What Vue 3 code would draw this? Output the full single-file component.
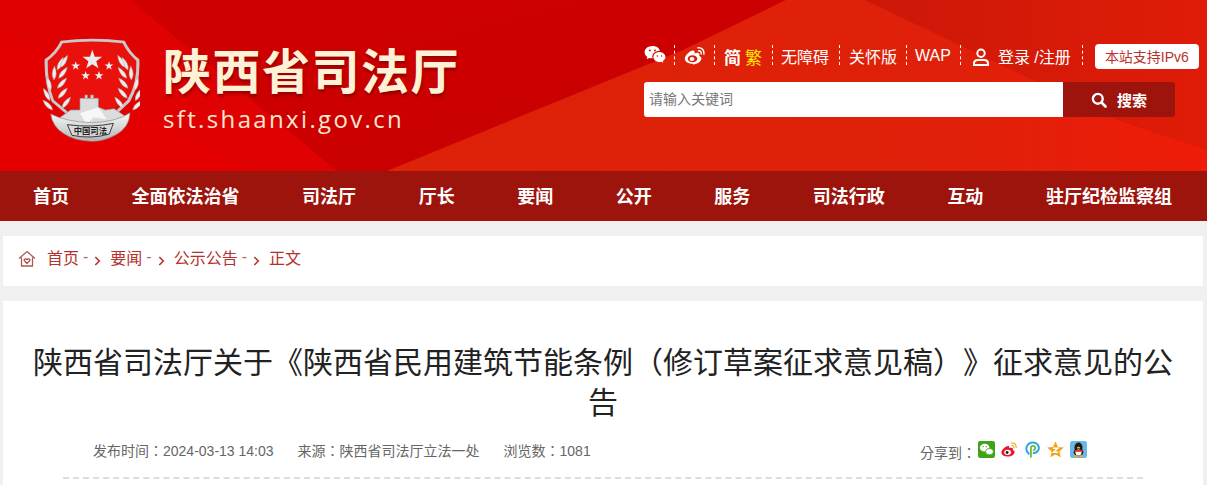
<template>
  <div class="page">
    <header class="top">
      <svg class="top-bg" viewBox="0 0 1207 171" preserveAspectRatio="none" aria-hidden="true">
        <defs>
          <linearGradient id="bandRight" x1="0" y1="0" x2="1" y2="0">
            <stop offset="0" stop-color="#dc2208" />
            <stop offset="0.7" stop-color="#e0200a" />
            <stop offset="1" stop-color="#ee1c08" />
          </linearGradient>
          <linearGradient id="bandDark" x1="0" y1="0" x2="1" y2="0">
            <stop offset="0" stop-color="#cc1808" />
            <stop offset="1" stop-color="#df1c08" />
          </linearGradient>
          <linearGradient id="bandMid" x1="0" y1="0" x2="1" y2="1">
            <stop offset="0" stop-color="#d00000" />
            <stop offset="1" stop-color="#c80000" />
          </linearGradient>
        </defs>
        <rect width="1207" height="171" fill="#e00202" />
        <polygon points="130,0 786,0 683,50 387,171 337,171" fill="url(#bandMid)" />
        <polygon points="0,30 250,171 0,171" fill="#e40000" />
        <polygon points="387,171 683,50 786,0 865,0 960,45 1113,118 1207,150 1207,171" fill="url(#bandRight)" />
        <polygon points="865,0 1207,0 1207,150 1113,118 960,45" fill="url(#bandDark)" />
      </svg>

      <a class="logo">
        <svg class="emblem" viewBox="0 0 330 360" aria-hidden="true">
          <defs>
            <linearGradient id="silver" x1="0" y1="0" x2="0" y2="1">
              <stop offset="0" stop-color="#fafafa" />
              <stop offset="1" stop-color="#b4b4b4" />
            </linearGradient>
            <radialGradient id="shieldRed" cx="0.5" cy="0.4" r="0.7">
              <stop offset="0.75" stop-color="#ea100c" />
              <stop offset="1" stop-color="#b00808" />
            </radialGradient>
          </defs>
          <path d="M92 32Q188 20 284 32Q300 66 328 88Q332 160 300 215L250 262H120L65 215Q42 160 44 88Q76 66 92 32Z" fill="#c9c9c9" />
          <path d="M98 40Q188 29 278 40Q293 70 319 92Q322 160 292 210L245 255H125L72 210Q52 160 53 92Q83 70 98 40Z" fill="url(#shieldRed)" />
          <polygon v-for="s in stars" :key="s.x" :points="starPoints(s.x, s.y, s.r)" fill="#ececec" />
          <g v-for="side in ['left', 'right']" :key="side" :transform="side === 'right' ? 'matrix(-1 0 0 1 376 0)' : ''">
            <path v-for="(l, i) in leaves" :key="i" :transform="`translate(${l.x} ${l.y}) rotate(${l.a})`" d="M0 0Q12 -17 0 -42Q-12 -17 0 0Z" fill="#ececec" stroke="#a3a3a3" stroke-width="1.200" />
          </g>
          <path d="M88 264L122 240L150 240V205H205V232L226 240L252 236L290 262L240 300H140Z" fill="#dcdcdc" stroke="#9a9a9a" stroke-width="2" />
          <path d="M165 205V195H172V205M182 205V195H190V205" fill="#dcdcdc" stroke="#9a9a9a" stroke-width="2" />
          <path d="M150 250L205 232L230 268L190 262L170 285Z" fill="#f7f7f7" />
          <path d="M62 252Q110 276 185 278Q260 276 300 248Q298 292 258 314Q222 334 185 334Q130 332 100 310Q68 290 62 252Z" fill="url(#silver)" stroke="#8d8d8d" stroke-width="2" />
          <path d="M112 284Q185 294 250 280L238 312Q185 328 126 316Z" fill="#d9d9d9" stroke="#3c3c3c" stroke-width="3" />
          <text x="181" y="312" class="emblem-text" text-anchor="middle">中国司法</text>
        </svg>
        <div class="logo-text">
          <div class="logo-name">陕西省司法厅</div>
          <div class="logo-url">sft.shaanxi.gov.cn</div>
        </div>
      </a>

      <div class="tools">
        <div class="tool-row">
          <svg class="ico-wechat" viewBox="0 0 22 19" aria-hidden="true">
            <path d="M8.500 1C4 1 .6 3.800.6 7.200c0 2 1.100 3.600 2.800 4.800l-.7 2.200 2.500-1.300c1 .3 1.800.4 2.800.4h.6c-.2-.5-.3-1-.3-1.600 0-3.200 3-5.700 6.800-5.700h.5C15.900 3.200 12.500 1 8.500 1z" fill="#fff" />
            <path d="M21.400 12.100c0-2.800-2.800-5-6-5-3.400 0-6 2.200-6 5s2.600 5 6 5c.7 0 1.400-.1 2-.3l1.900 1-.5-1.700c1.500-1 2.600-2.400 2.600-4z" fill="#fff" />
            <circle cx="5.800" cy="5.500" r="1" fill="#d8130a" />
            <circle cx="11" cy="5.500" r="1" fill="#d8130a" />
            <circle cx="13.300" cy="11" r=".8" fill="#d8130a" />
            <circle cx="17.600" cy="11" r=".8" fill="#d8130a" />
          </svg>
          <i class="sep"></i>
          <svg class="ico-weibo" viewBox="0 0 22 19" aria-hidden="true">
            <path d="M9 17.800c-4.300 0-8.200-2-8.200-5 0-1.700 1.100-3.600 2.900-5.400C6.200 4.900 9 3.800 10.200 5c.6.500.6 1.400.3 2.400 1.600-.6 3.700-.9 4.600.1.500.6.500 1.500 0 2.500 1.200.4 2.300 1.100 2.300 2.600 0 2.600-3.800 5.800-8.400 5.800z" fill="#fff" />
            <ellipse cx="8.500" cy="12.700" rx="4.800" ry="3.500" fill="#dc1c0b" />
            <ellipse cx="8" cy="12.900" rx="2.400" ry="2" fill="#fff" />
            <path d="M14 1.800c3.500-.6 6.700 2.300 5.900 6.300M14.500 4.900c1.700-.3 3.100 1.100 2.700 3" fill="none" stroke="#fff" stroke-width="1.500" stroke-linecap="round" />
          </svg>
          <i class="sep"></i>
          <span class="lang">简</span>
          <span class="lang alt">繁</span>
          <i class="sep"></i>
          <a class="link first">无障碍</a>
          <i class="sep"></i>
          <a class="link">关怀版</a>
          <i class="sep"></i>
          <a class="link wap">WAP</a>
          <i class="sep"></i>
          <svg class="ico-user" viewBox="0 0 18 18" aria-hidden="true">
            <circle cx="9" cy="5.200" r="3.700" fill="none" stroke="#fff" stroke-width="2" />
            <path d="M2 17v-1.500c0-2.200 1.600-3.500 3.800-3.500h6.400c2.200 0 3.800 1.300 3.800 3.500V17z" fill="none" stroke="#fff" stroke-width="2" />
          </svg>
          <a class="link login">登录 /注册</a>
          <i class="sep"></i>
          <a class="ipv6">本站支持IPv6</a>
        </div>
        <div class="search">
          <input class="search-input" type="text" placeholder="请输入关键词" />
          <button class="search-btn">
            <svg viewBox="0 0 16 16" aria-hidden="true">
              <circle cx="6.800" cy="6.800" r="4.900" fill="none" stroke="#fff" stroke-width="2.400" />
              <path d="M10.500 10.500L14.500 14.500" stroke="#fff" stroke-width="2.600" stroke-linecap="round" />
            </svg>
            <span>搜索</span>
          </button>
        </div>
      </div>
    </header>

    <nav class="nav">
      <a v-for="item in navItems" :key="item">{{ item }}</a>
    </nav>

    <div class="crumbs">
      <svg class="ico-home" viewBox="0 0 18 18" aria-hidden="true">
        <path d="M1 8.500L9 1.500l8 7M3.500 7.500V16h11V7.500" fill="none" stroke="#a85b5b" stroke-width="1.300" />
        <path d="M9 13.500L6.300 10.700c-.9-1.400 1.500-2.700 2.700-1.100 1.200-1.600 3.600-.3 2.700 1.100z" fill="none" stroke="#c03a3a" stroke-width="1.200" />
      </svg>
      <template v-for="(c, i) in crumbs" :key="c">
        <a>{{ c }}</a>
        <template v-if="i < crumbs.length - 1">
          <span class="dash">-</span>
          <svg class="chev" viewBox="0 0 8 12" aria-hidden="true">
            <path d="M1.500 1.500L6 6l-4.500 4.500" fill="none" stroke="#b3322e" stroke-width="1.800" />
          </svg>
        </template>
      </template>
    </div>

    <main class="article">
      <h1>陕西省司法厅关于《陕西省民用建筑节能条例（修订草案征求意见稿）》征求意见的公告</h1>
      <div class="meta">
        <div class="meta-left">
          <span>发布时间：2024-03-13 14:03</span>
          <span>来源：陕西省司法厅立法一处</span>
          <span>浏览数：1081</span>
        </div>
        <div class="share">
          <span class="share-label">分享到：</span>
          <svg viewBox="0 0 16 16" aria-hidden="true">
            <rect width="16" height="16" rx="2" fill="#3fa315" />
            <ellipse cx="6.300" cy="6.300" rx="4.500" ry="3.600" fill="#fff" />
            <ellipse cx="10.800" cy="10" rx="3.700" ry="3" fill="#fff" stroke="#3fa315" stroke-width=".8" />
            <circle cx="4.800" cy="5.300" r=".6" fill="#3fa315" />
            <circle cx="7.800" cy="5.300" r=".6" fill="#3fa315" />
          </svg>
          <svg viewBox="0 0 18 16" aria-hidden="true">
            <path d="M7.500 15.500C3.500 15.500.5 13.700.5 11.200c0-1.500 1-3.100 2.700-4.700 2.100-2 4.400-2.800 5.300-1.900.4.500.4 1.200.1 2 1.600-.6 3.300-.6 3.800.2.300.5.300 1.100 0 1.800 1 .3 2 1 2 2.300 0 2.300-3.300 4.600-6.900 4.600z" fill="#e6162d" />
            <ellipse cx="7" cy="11" rx="3.600" ry="2.800" fill="#fff" />
            <circle cx="6.500" cy="11.200" r="1.500" fill="#222" />
            <path d="M11 1.200c3.100-.5 5.600 1.900 5 5M11.500 3.800c1.400-.2 2.500.8 2.200 2.300" fill="none" stroke="#f59a14" stroke-width="1.100" stroke-linecap="round" />
          </svg>
          <svg viewBox="0 0 14 16" aria-hidden="true">
            <path d="M4 12.500C1 10 .7 6.800 2 4.500 3.500 1.800 7 .6 10 2c2.800 1.400 3.600 4.500 2.400 6.800-1 1.800-3 2.700-5 2.300" fill="none" stroke="#2ea7e0" stroke-width="1.900" />
            <path d="M5.500 15.500V6.500c0-1.300 1-2 2-2 1.100 0 2 .9 2 2s-.9 2-2 2" fill="none" stroke="#6dba3e" stroke-width="1.700" />
          </svg>
          <svg viewBox="0 0 16 16" aria-hidden="true">
            <polygon points="8,.5 10.300,5.600 15.800,6.200 11.700,9.900 12.900,15.400 8,12.600 3.100,15.400 4.300,9.900 .2,6.200 5.700,5.600" fill="#f3a21a" />
            <path d="M5.800 6.800h4.400L6 10.600h4.400" fill="none" stroke="#fff" stroke-width="1.300" />
          </svg>
          <svg viewBox="0 0 16 16" aria-hidden="true">
            <rect width="16" height="16" rx="2" fill="#6ab8e8" />
            <ellipse cx="8" cy="6" rx="3.800" ry="4.600" fill="#1c1c1c" />
            <ellipse cx="8" cy="10.500" rx="4.500" ry="3.800" fill="#1c1c1c" />
            <ellipse cx="8" cy="10.800" rx="2.900" ry="2.900" fill="#fff" />
            <path d="M4.300 8.500h7.400v1.700H4.300z" fill="#e62a1c" />
            <ellipse cx="5.500" cy="14.300" rx="2.200" ry="1" fill="#f5b01a" />
            <ellipse cx="10.500" cy="14.300" rx="2.200" ry="1" fill="#f5b01a" />
            <ellipse cx="8" cy="6.300" rx="1.600" ry=".8" fill="#f5b01a" />
          </svg>
        </div>
      </div>
      <div class="rule"></div>
    </main>
  </div>
</template>

<script setup>
const navItems = ['首页', '全面依法治省', '司法厅', '厅长', '要闻', '公开', '服务', '司法行政', '互动', '驻厅纪检监察组']
const crumbs = ['首页', '要闻', '公示公告', '正文']

const stars = [
  { x: 187, y: 90, r: 31 },
  { x: 137, y: 108, r: 14 },
  { x: 237, y: 108, r: 14 },
  { x: 167, y: 137, r: 14 },
  { x: 207, y: 137, r: 14 }
]

const starPoints = (cx, cy, r) => {
  const pts = []
  for (let i = 0; i < 10; i++) {
    const rad = i % 2 ? r * 0.4 : r
    const a = (Math.PI / 5) * i - Math.PI / 2
    pts.push(`${(cx + rad * Math.cos(a)).toFixed(1)},${(cy + rad * Math.sin(a)).toFixed(1)}`)
  }
  return pts.join(' ')
}

// 麦穗叶片，右边一侧用镜像
const leaves = [
  { x: 82, y: 120, a: 25 }, { x: 92, y: 112, a: 30 },
  { x: 72, y: 150, a: 2 }, { x: 86, y: 145, a: 38 },
  { x: 62, y: 182, a: -14 }, { x: 82, y: 175, a: 42 },
  { x: 60, y: 212, a: -28 }, { x: 84, y: 205, a: 42 },
  { x: 68, y: 240, a: -45 }, { x: 96, y: 234, a: 38 }
]
</script>

<style scoped>
.page {
  height: 485px;
  overflow: hidden;
  background: #f0f0f0;
  font-family: "Liberation Sans", "Noto Sans CJK SC", sans-serif;
  text-spacing-trim: space-all;
}

a { cursor: pointer; }

.top {
  position: relative;
  height: 171px;
  display: flex;
  justify-content: space-between;
  overflow: hidden;
}
.top-bg {
  position: absolute;
  left: 0;
  top: 0;
  width: 100%;
  height: 100%;
}

.logo {
  position: relative;
  display: flex;
  align-items: flex-start;
  padding: 30px 0 0 30px;
}
.emblem { width: 110px; height: 120px; flex: none; }
.emblem-text { font-size: 25px; font-weight: 700; fill: #222; }
.logo-text { margin-left: 23px; padding-top: 7px; }
.logo-name {
  font-family: "Noto Sans CJK SC", sans-serif;
  font-size: 48px;
  line-height: 62px;
  font-weight: 700;
  letter-spacing: 1.500px;
  color: #fdf1d6;
  text-shadow: 1px 3px 3px rgba(120, 0, 0, .6);
  white-space: nowrap;
}
.logo-url {
  margin-top: 4px;
  font-family: "Open Sans", "Liberation Sans", sans-serif;
  font-size: 24px;
  line-height: 32px;
  letter-spacing: 2.350px;
  color: #fbe6d0;
  white-space: nowrap;
}

.tools {
  position: relative;
  width: 563px;
  padding-top: 44px;
}
.tool-row {
  height: 25px;
  display: flex;
  align-items: center;
  color: #fff;
  font-size: 16px;
  white-space: nowrap;
}
.sep {
  width: 0;
  height: 20px;
  margin-top: -4px;
  border-left: 1px dashed #fff;
  flex: none;
}
.ico-wechat { width: 22px; height: 19px; margin-right: 8px; margin-top: -4px; }
.ico-weibo { width: 22px; height: 19px; margin: -2px 8px 0 9px; }
.lang { margin-left: 9px; font-size: 17px; font-weight: 700; width: 18px; }
.lang.alt { margin: 0 9px 0 3px; color: #ffea00; font-weight: 400; }
.link { color: #fff; margin: 1px 9px 0; line-height: 25px; }
.link.first { margin-left: 8px; margin-right: 10px; }
.link.wap { margin: -3px 9px 0 8px; }
.ico-user { width: 18px; height: 18px; margin-left: 11px; }
.link.login { margin: 1px 10px 0 8px; width: 74px; }
.ipv6 {
  margin-left: 12px;
  width: 104px;
  height: 25px;
  line-height: 26px;
  text-align: center;
  font-size: 14px;
  color: #b8332a;
  background: #fff;
  border-radius: 4px;
}

.search {
  display: flex;
  width: 531px;
  height: 35px;
  margin-top: 13px;
}
.search-input {
  width: 419px;
  height: 35px;
  box-sizing: border-box;
  padding: 0 5px 2px;
  border: 0;
  outline: 0;
  border-radius: 3px 0 0 3px;
  background: #fff;
  font-family: inherit;
  font-size: 14px;
}
.search-input::placeholder { color: #777; opacity: 1; }
.search-btn {
  flex: 1;
  display: flex;
  align-items: center;
  justify-content: center;
  gap: 10px;
  border: 0;
  padding: 0;
  color: #fff;
  background: #9c140c;
  border-radius: 0 3px 3px 0;
  font-family: inherit;
  font-size: 15px;
  font-weight: 700;
}
.search-btn svg { width: 16px; height: 16px; }

.nav {
  height: 50px;
  box-sizing: border-box;
  padding: 0 35px 2px 33px;
  display: flex;
  align-items: center;
  justify-content: space-between;
  background: #9c140c;
}
.nav a {
  color: #fff;
  font-size: 18px;
  font-weight: 700;
}

.crumbs {
  display: flex;
  align-items: center;
  height: 50px;
  box-sizing: border-box;
  margin: 15px 4px 0 3px;
  padding: 0 0 9px 15px;
  background: #fff;
  color: #b3322e;
  font-size: 16px;
}
.ico-home { width: 18px; height: 18px; margin: 4px 11px 0 0; }
.dash { margin: 0 6px 0 4px; font-size: 16px; color: #b06a66; }
.chev { width: 7px; height: 12px; margin: 9px 9px 0 0; }

.article {
  height: 184px;
  margin: 15px 4px 0 3px;
  padding: 42px 30px 0;
  background: #fff;
  overflow: hidden;
}
.article h1 {
  margin: 0;
  font-size: 30px;
  line-height: 40px;
  font-weight: 400;
  text-align: center;
  color: #222;
}
.meta {
  display: flex;
  align-items: center;
  justify-content: space-between;
  height: 24px;
  margin-top: 15px;
  padding: 0 86px 0 60px;
  font-family: "Liberation Sans", "Noto Sans CJK TC", sans-serif;
  font-size: 14px;
  color: #666;
}
.meta-left { display: flex; gap: 24px; }
.share { display: flex; align-items: flex-start; gap: 6px; height: 24px; }
.share svg { width: 17px; height: 17px; flex: none; margin-top: 3px; }
.share-label { margin: 4px -4px 0 0; }
.rule {
  margin: 15px 30px 0;
  border-top: 2px dashed #ddd;
}
</style>
